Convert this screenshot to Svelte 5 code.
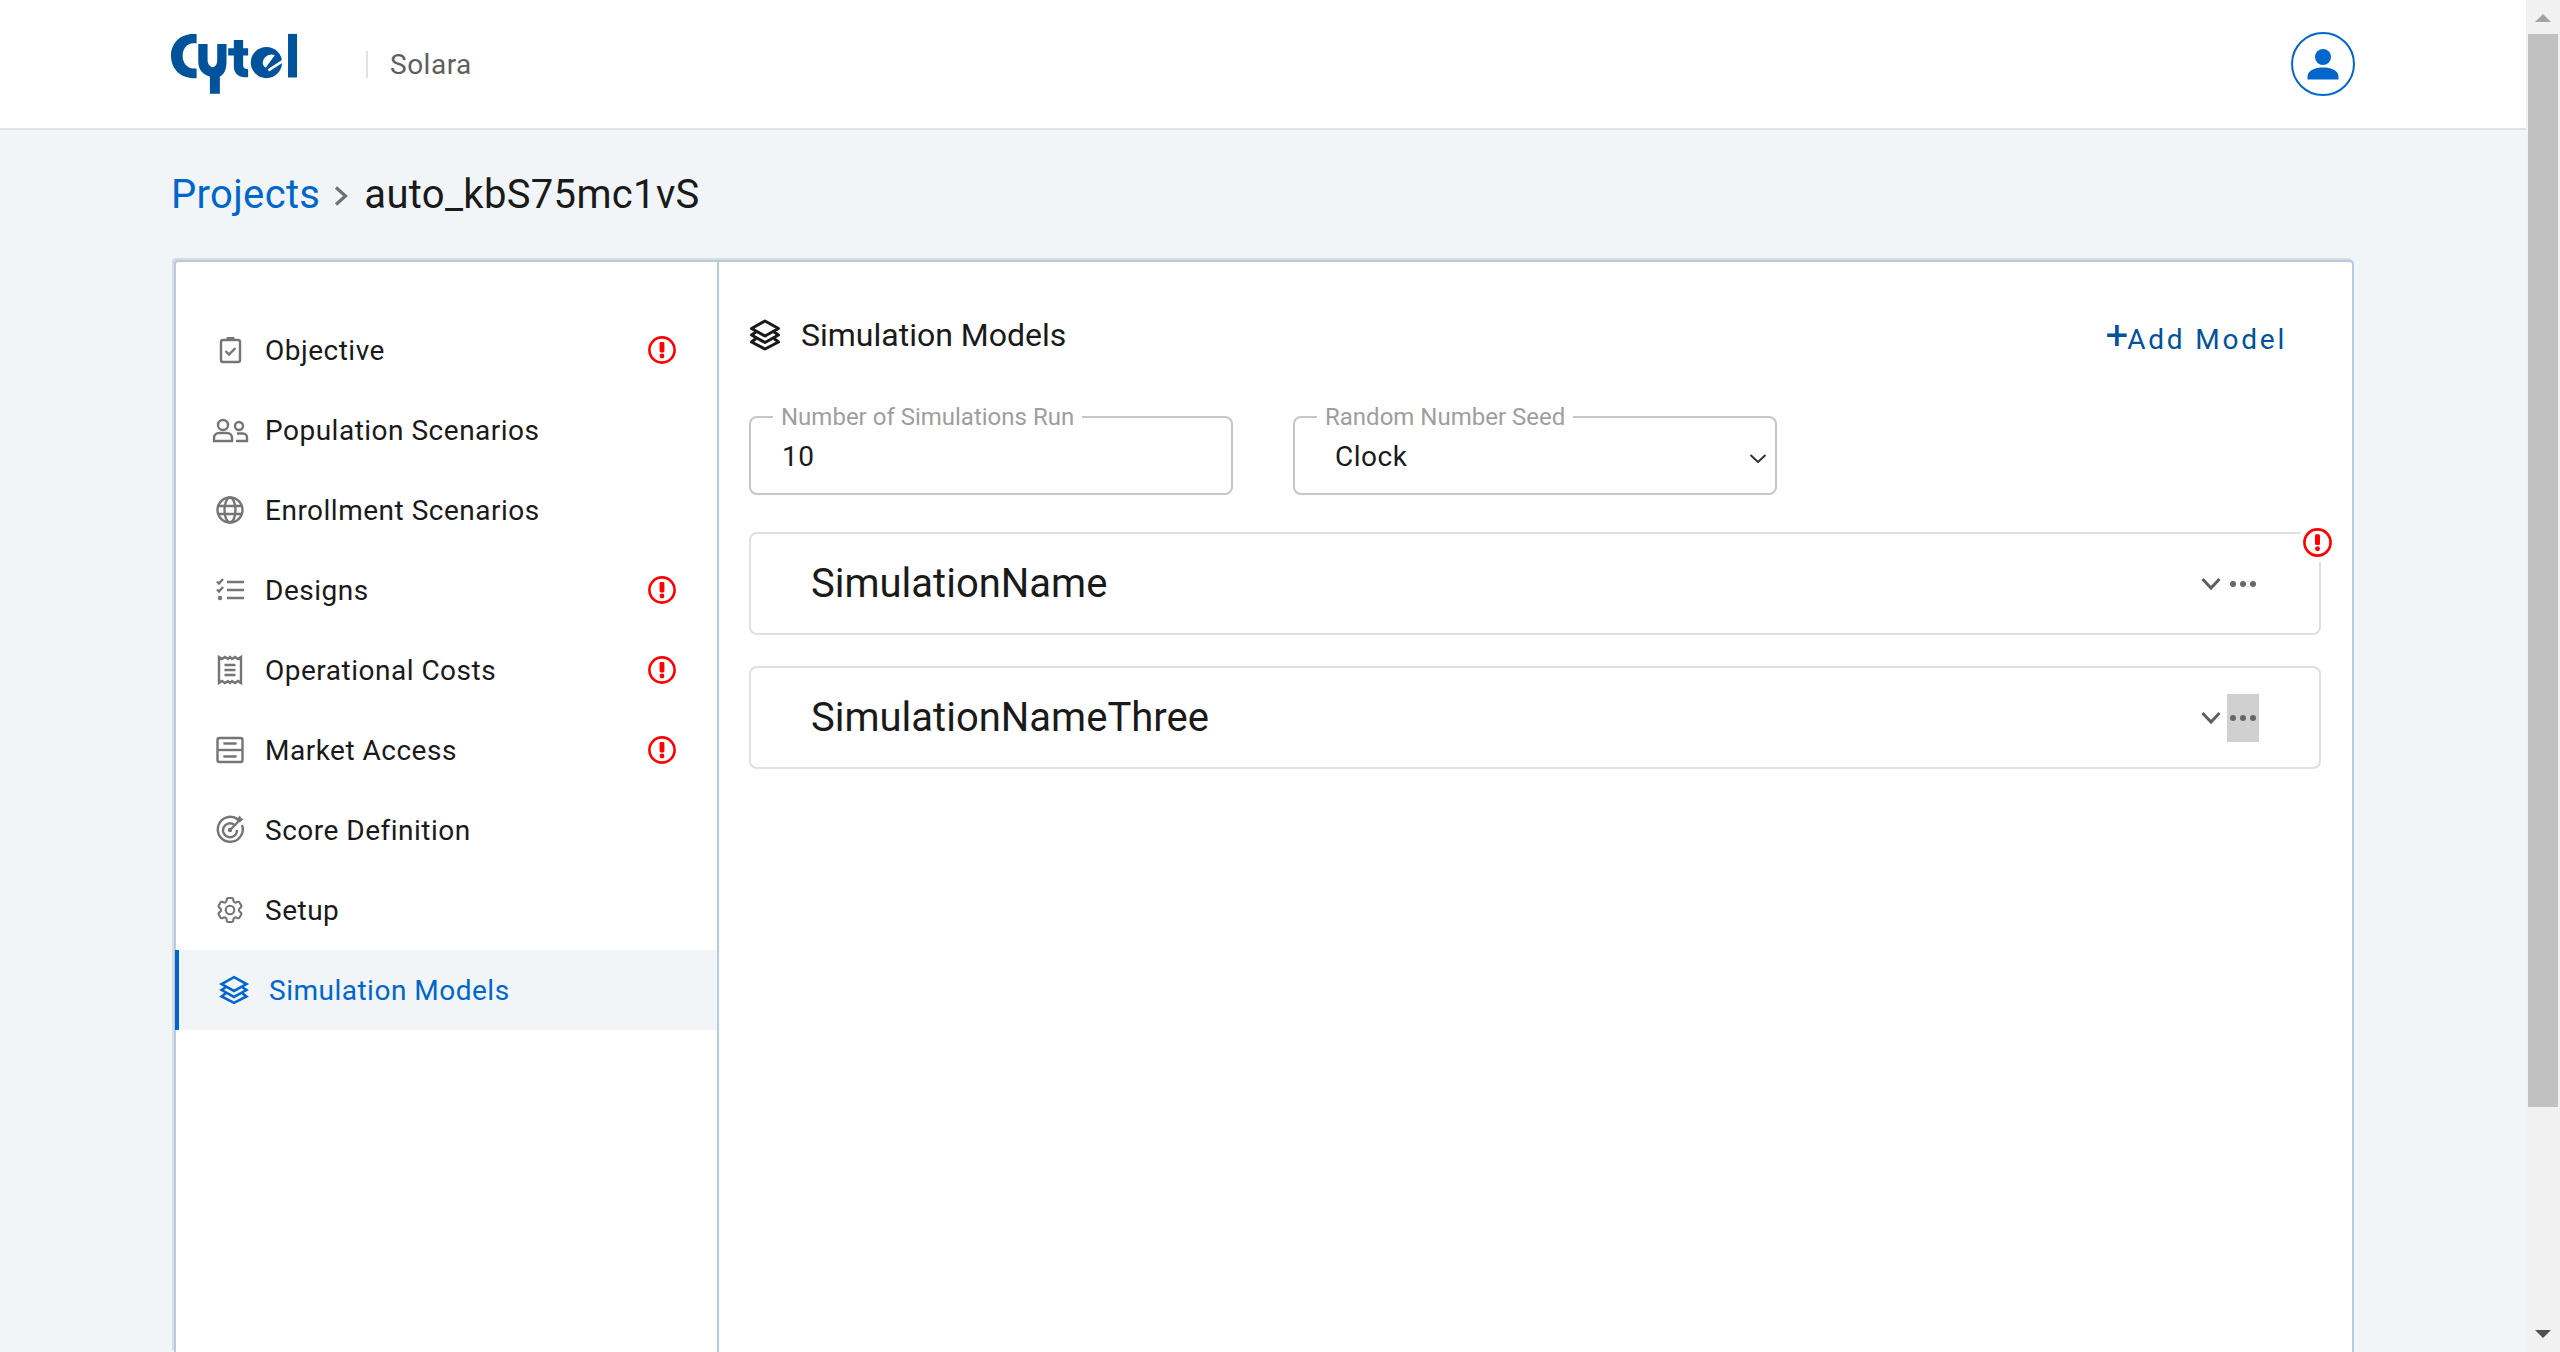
<script>
    const navItems = [
        { id: "objective", label: "Objective", alert: true },
        { id: "population", label: "Population Scenarios" },
        { id: "enrollment", label: "Enrollment Scenarios" },
        { id: "designs", label: "Designs", alert: true },
        { id: "costs", label: "Operational Costs", alert: true },
        { id: "market", label: "Market Access", alert: true },
        { id: "score", label: "Score Definition" },
        { id: "setup", label: "Setup" },
        { id: "models", label: "Simulation Models", active: true },
    ];

    const models = [
        { name: "SimulationName", alert: true },
        { name: "SimulationNameThree", hovered: true },
    ];

    const gear =
        "M9.594 3.94c.09-.542.56-.94 1.11-.94h2.593c.55 0 1.02.398 1.11.94l.213 1.281c.063.374.313.686.645.87.074.04.147.083.22.127.325.196.72.257 1.075.124l1.217-.456a1.125 1.125 0 0 1 1.37.49l1.296 2.247a1.125 1.125 0 0 1-.26 1.431l-1.003.827c-.293.241-.438.613-.43.992a7.723 7.723 0 0 1 0 .255c-.008.378.137.75.43.991l1.004.827c.424.35.534.955.26 1.43l-1.298 2.247a1.125 1.125 0 0 1-1.369.491l-1.217-.456c-.355-.133-.75-.072-1.076.124a6.47 6.47 0 0 1-.22.128c-.331.183-.581.495-.644.869l-.213 1.281c-.09.543-.56.94-1.11.94h-2.594c-.55 0-1.019-.398-1.11-.94l-.213-1.281c-.062-.374-.312-.686-.644-.87a6.52 6.52 0 0 1-.22-.127c-.325-.196-.72-.257-1.076-.124l-1.217.456a1.125 1.125 0 0 1-1.369-.49l-1.297-2.247a1.125 1.125 0 0 1 .26-1.431l1.004-.827c.292-.24.437-.613.43-.991a6.932 6.932 0 0 1 0-.255c.007-.38-.138-.751-.43-.992l-1.004-.827a1.125 1.125 0 0 1-.26-1.43l1.297-2.247a1.125 1.125 0 0 1 1.37-.491l1.216.456c.356.133.751.072 1.076-.124.072-.044.146-.086.22-.128.332-.183.582-.495.644-.869l.214-1.28Z";
</script>

{#snippet layers()}
    <path d="M16 2 L29.5 9.5 L16 17 L2.500 9.5 Z" />
    <path d="M7 13 L2.500 16 L16 23.500 L29.500 16 L25 13" />
    <path d="M7 19.500 L2.500 23 L16 30 L29.500 23 L25 19.500" />
{/snippet}

{#snippet alertIcon()}
    <svg class="alert" viewBox="0 0 28 28" aria-hidden="true">
        <circle cx="14" cy="14" r="12.6" fill="none" stroke="#f00" stroke-width="2.6" />
        <rect x="11.6" y="6" width="4.8" height="10.500" rx="1.4" fill="#f00" />
        <circle cx="14" cy="20" r="2.4" fill="#f00" />
    </svg>
{/snippet}

{#snippet navIcon(id)}
    <svg class="nav-icon" viewBox="0 0 40 40" aria-hidden="true">
        {#if id === "objective"}
            <rect x="11" y="10" width="19" height="22" rx="2" />
            <rect class="solid" x="16.5" y="7" width="8" height="4" rx="1" />
            <path d="M15.5 21 L19 24.5 L25.5 18" />
        {:else if id === "population"}
            <circle cx="13" cy="15" r="5" />
            <path d="M4 31 V28 a5 5 0 0 1 5-5 h8 a5 5 0 0 1 5 5 v3 Z" />
            <circle cx="29" cy="16" r="4" />
            <path d="M27 23.5 h6 a4 4 0 0 1 4 4 v3.5 h-11" />
        {:else if id === "enrollment"}
            <circle cx="20" cy="20" r="12.5" />
            <ellipse cx="20" cy="20" rx="5.5" ry="12.5" />
            <path d="M8.5 16 H31.5 M8.5 24 H31.5" />
        {:else if id === "designs"}
            <path d="M17 12 H34 M17 20 H34 M17 28 H34" />
            <path d="M7 11.5 L9 13.5 L13 9 M7 19.5 L9 21.5 L13 17" />
            <circle class="solid" cx="10" cy="28" r="2.2" />
        {:else if id === "costs"}
            <path d="M9 7 L12 9 L15 7 L18 9 L20 7 L22 9 L25 7 L28 9 L31 7 V33 L28 31 L25 33 L22 31 L20 33 L18 31 L15 33 L12 31 L9 33 Z" />
            <path d="M14.500 15 H25.500 M14.500 20 H25.500 M14.500 25 H25.500" />
        {:else if id === "market"}
            <rect x="7.500" y="8" width="25" height="24" rx="2" />
            <path d="M7.500 20 H32.500" />
            <path d="M14.500 14.500 V13.500 H25.500 V14.500 M14.500 27.500 V26.500 H25.500 V27.500" />
        {:else if id === "score"}
            <path d="M28 9.5 A12.500 12.500 0 1 0 32 15" />
            <path d="M24 14.5 A7 7 0 1 0 27 20" />
            <circle class="solid" cx="20" cy="20" r="2.2" />
            <path d="M20 20 L28 12" />
            <path class="solid" d="M26.5 9 L30 5.5 L31 8 L33.5 9 L30 12.5 L27 12 Z" />
        {:else if id === "setup"}
            <g transform="translate(4 4) scale(1.333)" stroke-width="1.6">
                <path d={gear} />
                <circle cx="12" cy="12" r="3.2" />
            </g>
        {:else if id === "models"}
            <g transform="translate(5.300 5.300) scale(0.92)" stroke-width="2.8">
                {@render layers()}
            </g>
        {/if}
    </svg>
{/snippet}

<div class="page">
    <div class="main">
        <header class="topbar">
            <svg class="logo" viewBox="30 40 385 185" aria-label="Cytel">
                <path d="M110 42 H100 C60 42 33 70 33 108 C33 146 60 175 100 175 H110 V146 H100 C82 146 68 130 68 108 C68 86 82 70 100 70 H110 Z" />
                <path d="M115 72 H143 V120 C143 135 152 142 158 142 C166 142 172 135 172 120 V72 H200 V125 C200 150 192 165 180 170 V222 H150 V170 C130 165 115 150 115 125 Z" />
                <path d="M222 60 H250 V85 H265 V107 H250 V135 C250 145 255 148 265 148 V172 H255 C235 172 222 160 222 140 V107 H205 V85 H222 Z" />
                <circle cx="320" cy="128" r="47" />
                <path class="cut" d="M309 128 C311 110 330 100 345 106 L318 144 C312 140 309 135 309 128 Z" />
                <path class="cut-line" d="M326 152 L378 118" />
                <rect x="385" y="42" width="27" height="131" />
            </svg>
            <span class="app-name">Solara</span>
            <button class="avatar" aria-label="Account">
                <svg viewBox="0 0 60 60" aria-hidden="true">
                    <circle cx="30" cy="23" r="8" />
                    <path d="M14.500 43 C14.500 36 22 33.500 30 33.500 C38 33.500 45.500 36 45.500 43 V45.500 H14.500 Z" />
                </svg>
            </button>
        </header>

        <div class="crumbs">
            <a class="crumb-link" href="#projects">Projects</a>
            <svg class="crumb-sep" viewBox="0 0 14 20" aria-hidden="true"><path d="M2 1.500 L11.500 10 L2 18.500" /></svg>
            <span class="crumb-current">auto_kbS75mc1vS</span>
        </div>

        <section class="card">
            <nav class="sidebar">
                {#each navItems as item}
                    <div class="nav-row" class:active={item.active}>
                        {@render navIcon(item.id)}
                        <span class="nav-label">{item.label}</span>
                        {#if item.alert}
                            {@render alertIcon()}
                        {/if}
                    </div>
                {/each}
            </nav>

            <div class="content">
                <div class="content-head">
                    <h2 class="content-title">
                        <svg class="title-icon" viewBox="0 0 32 32" aria-hidden="true">
                            {@render layers()}
                        </svg>
                        Simulation Models
                    </h2>
                    <button class="add-btn"><span class="plus">+</span>Add Model</button>
                </div>

                <div class="fields">
                    <fieldset class="field">
                        <legend>Number of Simulations Run</legend>
                        <input type="text" value="10" />
                    </fieldset>
                    <fieldset class="field select-field">
                        <legend>Random Number Seed</legend>
                        <select>
                            <option>Clock</option>
                        </select>
                        <svg class="select-chevron" viewBox="0 0 18 9" aria-hidden="true"><path d="M1.500 1 L9 8 L16.500 1" /></svg>
                    </fieldset>
                </div>

                <div class="models">
                    {#each models as model}
                        <div class="model">
                            <span class="model-name">{model.name}</span>
                            <svg class="chevron" viewBox="0 0 20 14" aria-hidden="true"><path d="M1.500 2 L10 11 L18.500 2" /></svg>
                            <span class="more" class:hovered={model.hovered}>
                                <i></i><i></i><i></i>
                            </span>
                            {#if model.alert}
                                <span class="model-alert">{@render alertIcon()}</span>
                            {/if}
                        </div>
                    {/each}
                </div>
            </div>
        </section>
    </div>

    <div class="scrollbar" aria-hidden="true">
        <span class="arrow up"></span>
        <span class="thumb"></span>
        <span class="arrow down"></span>
    </div>
</div>

<style>
    :global(body) {
        margin: 0;
        overflow: hidden;
        background: #f1f5f8;
    }

    .page {
        display: flex;
        height: 1352px;
        overflow: hidden;
        font-family: Roboto, "Liberation Sans", sans-serif;
        color: #1a1a1a;
    }

    .main {
        flex: 1;
        min-width: 0;
        display: flex;
        flex-direction: column;
    }

    /* ── Header ── */
    .topbar {
        flex: none;
        height: 128px;
        display: flex;
        align-items: center;
        padding: 0 171px 0 170px;
        background: #fff;
        border-bottom: 2px solid #e2e2e2;
    }

    .logo {
        width: 128px;
        height: 62px;
        fill: #00529b;
    }
    .logo .cut {
        fill: #fff;
    }
    .logo .cut-line {
        fill: none;
        stroke: #fff;
        stroke-width: 8;
    }

    .app-name {
        margin-left: 68px;
        padding-left: 22px;
        height: 27px;
        line-height: 27px;
        border-left: 2px solid #e2e2e2;
        font-size: 28px;
        color: #5f5f5f;
        letter-spacing: 0.5px;
    }

    .avatar {
        margin-left: auto;
        width: 64px;
        height: 64px;
        padding: 0;
        border: 2px solid #0066cc;
        border-radius: 50%;
        background: #fff;
    }
    .avatar svg {
        display: block;
        width: 60px;
        height: 60px;
        fill: #0066cc;
    }

    /* ── Breadcrumb ── */
    .crumbs {
        flex: none;
        height: 128px;
        display: flex;
        align-items: center;
        padding-left: 171px;
        box-sizing: border-box;
        font-size: 40px;
        letter-spacing: 0.33px;
    }
    .crumb-link {
        color: #0066cc;
        text-decoration: none;
    }
    .crumb-sep {
        width: 14px;
        height: 20px;
        margin: 4px 16px 0 14px;
        fill: none;
        stroke: #6f6f6f;
        stroke-width: 3.2;
    }

    /* ── Card ── */
    .card {
        flex: 1;
        display: flex;
        margin: 2px 172px 0 174px;
        background: #fff;
        border: 2px solid #b3cce4;
        border-bottom: none;
        border-radius: 4px 4px 0 0;
        box-shadow: -2px -2px 0 #dcdcdc;
    }

    .sidebar {
        flex: none;
        width: 541px;
        padding-top: 48px;
        border-right: 2px solid #b3cce4;
    }

    .nav-row {
        display: flex;
        align-items: center;
        height: 80px;
        padding: 0 41px 0 34px;
        font-size: 28px;
        letter-spacing: 0.5px;
    }
    .nav-row.active {
        margin-left: -1px;
        padding-left: 35px;
        background: #f1f5f8;
        border-left: 4px solid #0066cc;
        color: #0066cc;
    }

    .nav-icon {
        flex: none;
        width: 40px;
        height: 40px;
        margin-right: 15px;
        fill: none;
        stroke: #757575;
        stroke-width: 2.4;
    }
    .nav-icon .solid {
        fill: #757575;
        stroke: none;
    }
    .active .nav-icon {
        stroke: #0066cc;
    }

    .alert {
        flex: none;
        display: block;
        width: 28px;
        height: 28px;
    }
    .nav-row .alert {
        margin-left: auto;
    }

    /* ── Content ── */
    .content {
        flex: 1;
        min-width: 0;
        padding: 0 31px 0 30px;
    }

    .content-head {
        display: flex;
        justify-content: space-between;
        height: 141px;
    }
    .content-title {
        display: flex;
        align-items: center;
        gap: 20px;
        height: 32px;
        margin: 57px 0 0;
        font-size: 32px;
        font-weight: 400;
    }
    .title-icon {
        width: 32px;
        height: 32px;
        fill: none;
        stroke: #1a1a1a;
        stroke-width: 3;
        stroke-linejoin: round;
    }

    .add-btn {
        align-self: flex-start;
        height: 40px;
        margin: 57px 34px 0 0;
        padding: 0;
        border: none;
        background: none;
        font: inherit;
        font-size: 28px;
        letter-spacing: 2.8px;
        color: #00529b;
    }
    .plus {
        margin-right: -1px;
        font-size: 40px;
        font-weight: 400;
        line-height: 0;
        letter-spacing: 0;
    }

    .fields {
        display: flex;
        gap: 60px;
    }
    .field {
        position: relative;
        box-sizing: border-box;
        width: 484px;
        height: 92px;
        margin: 0;
        padding: 0 0 0 22px;
        border: 2px solid #c6c6c6;
        border-radius: 8px;
    }
    .field legend {
        padding: 0 8px;
        font-size: 24px;
        line-height: 28px;
        color: #9e9e9e;
    }
    .field input,
    .field select {
        display: block;
        width: 100%;
        height: 50px;
        padding: 0 0 0 9px;
        box-sizing: border-box;
        border: none;
        outline: none;
        background: none;
        appearance: none;
        font: inherit;
        font-size: 28px;
        letter-spacing: 0.5px;
        color: #1a1a1a;
    }
    .select-field select {
        padding-left: 18px;
    }
    .select-chevron {
        position: absolute;
        right: 8px;
        top: 23px;
        width: 18px;
        height: 9px;
        fill: none;
        stroke: #333;
        stroke-width: 2;
    }

    .models {
        display: flex;
        flex-direction: column;
        gap: 31px;
        margin-top: 37px;
    }
    .model {
        position: relative;
        display: flex;
        align-items: center;
        box-sizing: border-box;
        height: 103px;
        padding: 0 60px;
        border: 2px solid #e0e0e0;
        border-radius: 8px;
    }
    .model-name {
        flex: 1;
        font-size: 40px;
    }
    .chevron {
        width: 20px;
        height: 14px;
        fill: none;
        stroke: #5f5f5f;
        stroke-width: 3;
    }
    .more {
        display: flex;
        align-items: center;
        justify-content: center;
        gap: 4px;
        width: 32px;
        height: 48px;
        margin-left: 6px;
    }
    .more.hovered {
        background: #d0d0d0;
    }
    .more i {
        width: 6px;
        height: 6px;
        border-radius: 50%;
        background: #666;
    }
    .model-alert {
        position: absolute;
        top: -11px;
        right: -18px;
        padding: 5px;
        background: #fff;
        border-radius: 50%;
    }
    .model-alert .alert {
        width: 29px;
        height: 29px;
    }

    /* ── Scrollbar ── */
    .scrollbar {
        flex: none;
        width: 34px;
        display: flex;
        flex-direction: column;
        align-items: center;
        background: #f1f1f1;
    }
    .thumb {
        width: 30px;
        height: 1073px;
        margin-top: 12px;
        background: #c1c1c1;
    }
    .arrow {
        width: 0;
        height: 0;
        border-left: 8px solid transparent;
        border-right: 8px solid transparent;
    }
    .arrow.up {
        margin-top: 14px;
        border-bottom: 8px solid #a3a3a3;
    }
    .arrow.down {
        margin-top: 223px;
        border-top: 8px solid #505050;
    }
</style>
